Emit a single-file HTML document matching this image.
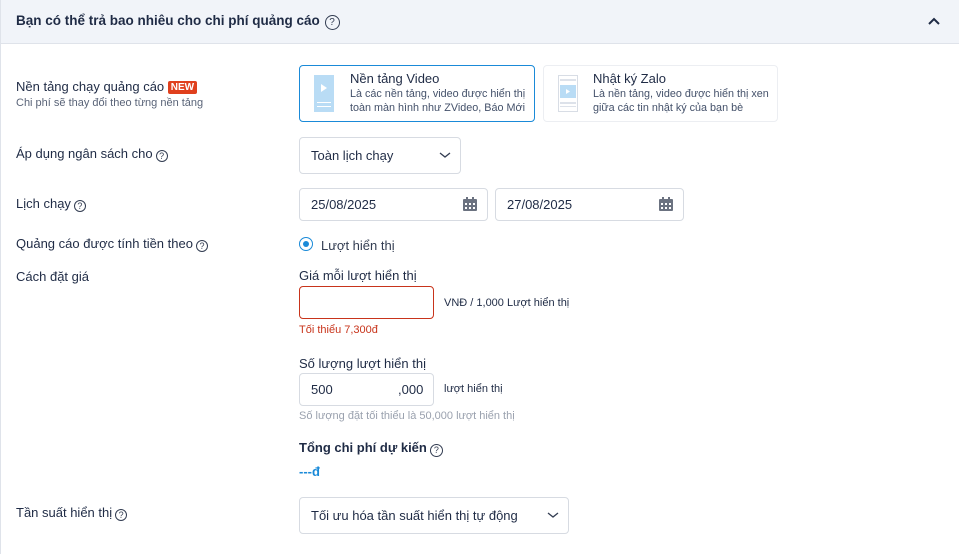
<!DOCTYPE html>
<html><head><meta charset="utf-8"><style>
*{box-sizing:border-box;margin:0;padding:0}
body{width:959px;height:554px;background:#fff;font-family:"Liberation Sans",sans-serif;color:#1f2b45;position:relative;overflow:hidden}
.a{position:absolute;white-space:nowrap}
.l{font-size:13px;color:#1f2b45}
.q{display:inline-block;width:12px;height:12px;border:1px solid #333d52;border-radius:50%;font-size:9px;line-height:10px;text-align:center;vertical-align:-1px;margin-left:3px;color:#333d52}
.box{position:absolute;border:1px solid #d7dbe2;border-radius:4px;background:#fff}
.t{font-size:13px;color:#1f2b45}
.s{font-size:10.8px;color:#44516a}
</style></head><body>
<div class="a" style="left:0;top:0;width:959px;height:44px;background:#f1f4f9;border-bottom:1px solid #dfe3ea"></div>
<div class="a" style="left:0;top:0;width:1px;height:554px;background:#dfe3ea"></div>
<div class="a" style="left:16px;top:13px;font-size:13.5px;font-weight:bold;color:#1f2b45">Bạn có thể trả bao nhiêu cho chi phí quảng cáo <span class="q" style="width:15px;height:15px;line-height:13px;font-size:10px;font-weight:normal;margin-left:1px;vertical-align:0">?</span></div>
<svg class="a" style="left:927px;top:16px" width="14" height="10" viewBox="0 0 14 10"><path d="M2 8L7 3L12 8" stroke="#1f2b45" stroke-width="2" fill="none"/></svg>

<div class="a l" style="left:16px;top:79px">Nền tảng chạy quảng cáo <span style="background:#e0401d;color:#fff;font-size:10px;font-weight:bold;padding:1px 3px;border-radius:2px;vertical-align:1px">NEW</span></div>
<div class="a" style="left:16px;top:97px;font-size:11px;color:#5a6478">Chi phí sẽ thay đổi theo từng nền tảng</div>

<div class="box" style="left:299px;top:65px;width:236px;height:57px;border-color:#1a8ad8"></div>
<svg class="a" style="left:314px;top:75px" width="20" height="37"><rect width="20" height="37" fill="#b9dcf5"/><path d="M7 9l6 4-6 4z" fill="#fff"/><rect x="3" y="27" width="14" height="1" fill="#fff"/><rect x="3" y="31" width="14" height="1" fill="#fff"/></svg>
<div class="a" style="left:350px;top:71px;font-size:13px;color:#1f2b45">Nền tảng Video</div>
<div class="a s" style="left:350px;top:88px">Là các nền tảng, video được hiển thị</div>
<div class="a s" style="left:350px;top:102px">toàn màn hình như ZVideo, Báo Mới</div>

<div class="box" style="left:543px;top:65px;width:235px;height:57px;border-color:#eceef2"></div>
<svg class="a" style="left:558px;top:75px" width="20" height="37"><rect x=".5" y=".5" width="19" height="36" fill="#fff" stroke="#d8dde5"/><rect x="2" y="4" width="16" height="2" fill="#dde2ea"/><rect x="2" y="10" width="16" height="13" fill="#b9dcf5"/><path d="M8 14l4 2.5-4 2.5z" fill="#fff"/><rect x="2" y="27" width="16" height="2" fill="#dde2ea"/><rect x="2" y="31" width="16" height="1" fill="#dde2ea"/></svg>
<div class="a" style="left:593px;top:71px;font-size:13px;color:#1f2b45">Nhật ký Zalo</div>
<div class="a s" style="left:593px;top:88px">Là nền tảng, video được hiển thị xen</div>
<div class="a s" style="left:593px;top:102px">giữa các tin nhật ký của bạn bè</div>

<div class="a l" style="left:16px;top:146px">Áp dụng ngân sách cho<span class="q">?</span></div>
<div class="box" style="left:299px;top:137px;width:162px;height:37px"></div>
<div class="a t" style="left:311px;top:148px">Toàn lịch chạy</div>
<svg class="a" style="left:439px;top:151px" width="12" height="8"><path d="M1 2l5 4 5-4" stroke="#333d52" stroke-width="1.3" fill="none"/></svg>

<div class="a l" style="left:16px;top:196px">Lịch chạy<span class="q">?</span></div>
<div class="box" style="left:299px;top:188px;width:189px;height:33px"></div>
<div class="a t" style="left:311px;top:197px">25/08/2025</div>
<div class="box" style="left:495px;top:188px;width:189px;height:33px"></div>
<div class="a t" style="left:507px;top:197px">27/08/2025</div>
<svg class="a" style="left:463px;top:197px" width="14" height="14"><rect x="0" y="2" width="14" height="12" rx="1" fill="#6b7280"/><rect x="3" y="0" width="2" height="4" fill="#6b7280"/><rect x="9" y="0" width="2" height="4" fill="#6b7280"/><g fill="#fff"><rect x="2" y="6" width="2" height="2"/><rect x="6" y="6" width="2" height="2"/><rect x="10" y="6" width="2" height="2"/><rect x="2" y="10" width="2" height="2"/><rect x="6" y="10" width="2" height="2"/><rect x="10" y="10" width="2" height="2"/></g></svg>
<svg class="a" style="left:659px;top:197px" width="14" height="14"><rect x="0" y="2" width="14" height="12" rx="1" fill="#6b7280"/><rect x="3" y="0" width="2" height="4" fill="#6b7280"/><rect x="9" y="0" width="2" height="4" fill="#6b7280"/><g fill="#fff"><rect x="2" y="6" width="2" height="2"/><rect x="6" y="6" width="2" height="2"/><rect x="10" y="6" width="2" height="2"/><rect x="2" y="10" width="2" height="2"/><rect x="6" y="10" width="2" height="2"/><rect x="10" y="10" width="2" height="2"/></g></svg>

<div class="a l" style="left:16px;top:236px">Quảng cáo được tính tiền theo<span class="q">?</span></div>
<div class="a" style="left:299px;top:237px;width:14px;height:14px;border:1.5px solid #1a8ad8;border-radius:50%"><div style="position:absolute;left:2.5px;top:2.5px;width:6px;height:6px;border-radius:50%;background:#1a8ad8"></div></div>
<div class="a t" style="left:321px;top:238px;color:#333d52">Lượt hiển thị</div>

<div class="a l" style="left:16px;top:269px">Cách đặt giá</div>
<div class="a t" style="left:299px;top:268px">Giá mỗi lượt hiển thị</div>
<div class="box" style="left:299px;top:286px;width:135px;height:33px;border-color:#c8341b"></div>
<div class="a" style="left:444px;top:297px;font-size:11px;color:#1f2b45">VNĐ / 1,000 Lượt hiển thị</div>
<div class="a" style="left:299px;top:324px;font-size:11px;color:#c8341b">Tối thiểu 7,300đ</div>

<div class="a t" style="left:299px;top:356px">Số lượng lượt hiển thị</div>
<div class="box" style="left:299px;top:373px;width:135px;height:33px"></div>
<div class="a t" style="left:311px;top:382px">500</div>
<div class="a t" style="left:398px;top:382px">,000</div>
<div class="a" style="left:444px;top:383px;font-size:11px;color:#1f2b45">lượt hiển thị</div>
<div class="a" style="left:299px;top:410px;font-size:11px;color:#9aa1ae">Số lượng đặt tối thiểu là 50,000 lượt hiển thị</div>

<div class="a" style="left:299px;top:440px;font-size:13px;font-weight:bold;color:#1f2b45">Tổng chi phí dự kiến<span class="q" style="font-weight:normal;width:13px;height:13px">?</span></div>
<div class="a" style="left:299px;top:464px;font-size:13px;font-weight:bold;color:#1a8ad8">---đ</div>

<div class="a l" style="left:16px;top:505px">Tần suất hiển thị<span class="q">?</span></div>
<div class="box" style="left:299px;top:497px;width:270px;height:37px"></div>
<div class="a t" style="left:311px;top:508px">Tối ưu hóa tần suất hiển thị tự động</div>
<svg class="a" style="left:547px;top:511px" width="12" height="8"><path d="M1 2l5 4 5-4" stroke="#333d52" stroke-width="1.3" fill="none"/></svg>
</body></html>
